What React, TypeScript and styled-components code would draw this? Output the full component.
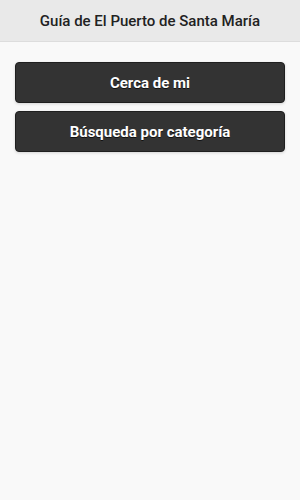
import React from "react";
import styled, { createGlobalStyle } from "styled-components";

const Global = createGlobalStyle`
  html, body { margin: 0; padding: 0; background: #f9f9f9; }
  body { font-family: Roboto, "Noto Sans", sans-serif; }
`;

const Page = styled.div`
  min-height: 500px;
  background: #f9f9f9;
  display: flex;
  flex-direction: column;
`;

const Header = styled.header`
  height: 41px;
  background: #e9e9e9;
  border-bottom: 1px solid #dddddd;
  display: flex;
  align-items: center;
  justify-content: center;
`;

const Title = styled.h1`
  margin: 0;
  font-size: 15px;
  font-weight: 500;
  color: #222222;
`;

const Content = styled.main`
  padding: 20px 15px 15px;
  display: flex;
  flex-direction: column;
  gap: 8px;
`;

const Button = styled.a`
  height: 41px;
  box-sizing: border-box;
  display: flex;
  align-items: center;
  justify-content: center;
  background: #333333;
  border: 1px solid #1f1f1f;
  border-radius: 4px;
  box-shadow: 0 1px 3px rgba(0, 0, 0, 0.15);
  color: #ffffff;
  font-size: 15px;
  font-weight: 700;
  text-shadow: 0 1px 0 #111111;
  text-decoration: none;
`;

export default function App() {
  return (
    <Page>
      <Global />
      <Header>
        <Title>Guía de El Puerto de Santa María</Title>
      </Header>
      <Content>
        <Button href="#">Cerca de mi</Button>
        <Button href="#">Búsqueda por categoría</Button>
      </Content>
    </Page>
  );
}
